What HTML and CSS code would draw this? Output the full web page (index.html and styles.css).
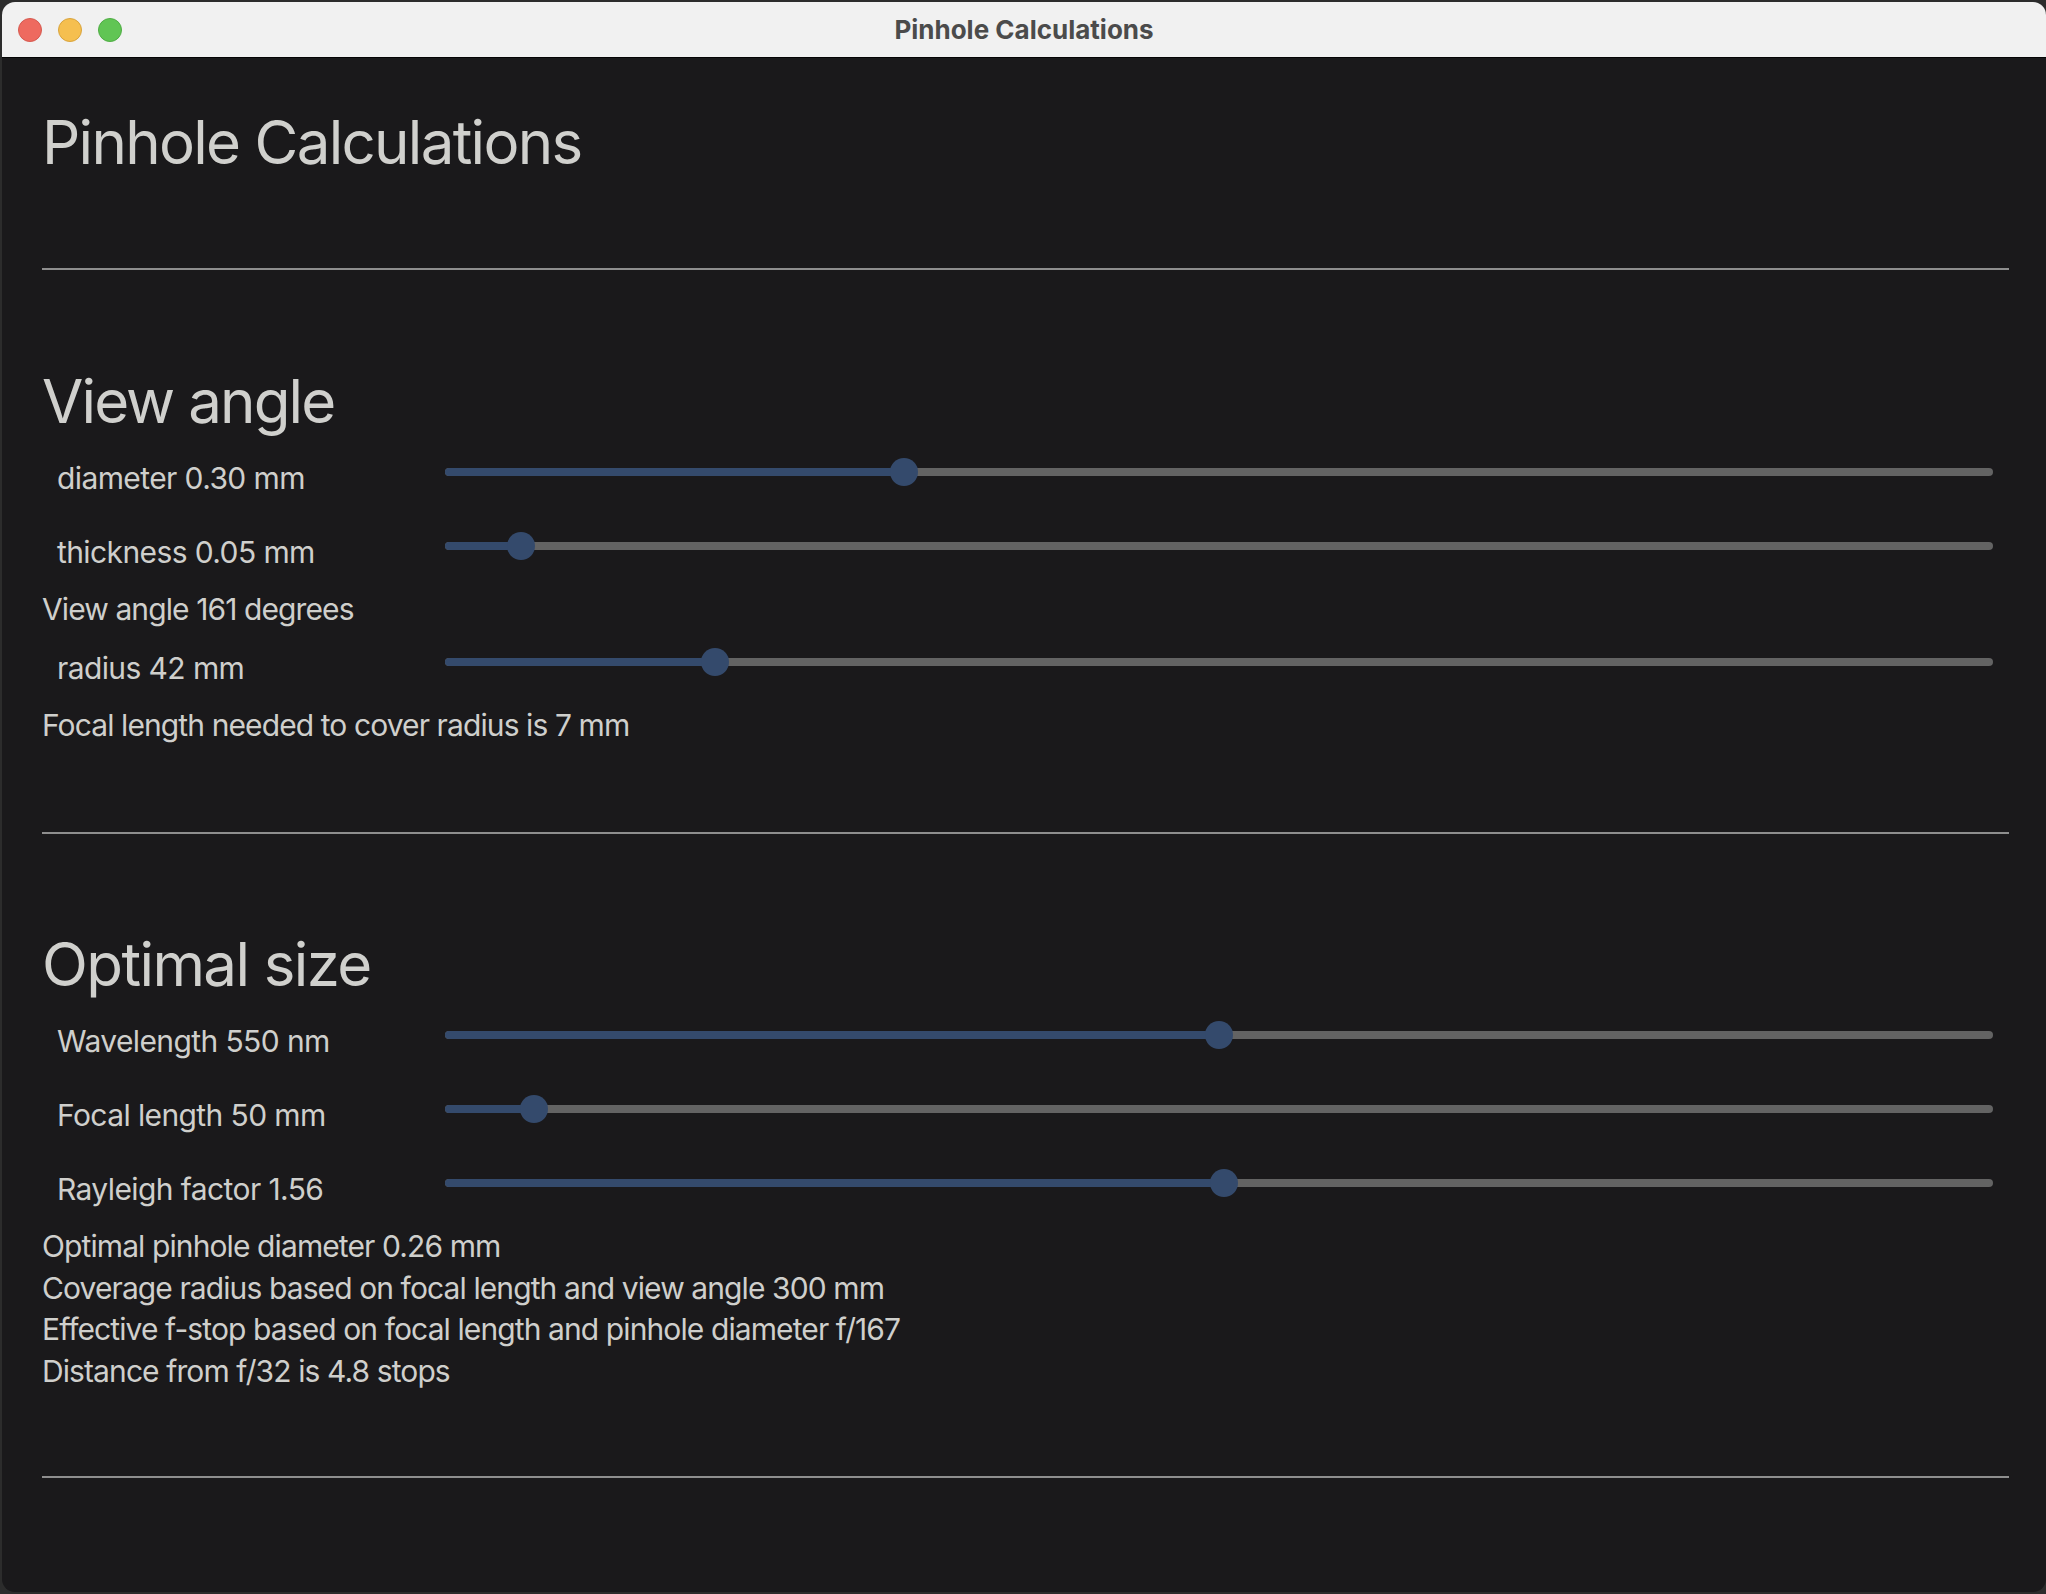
FILE: index.html
```html
<!DOCTYPE html>
<html lang="en">
<head>
<meta charset="utf-8">
<title>Pinhole Calculations</title>
<link rel="stylesheet" href="styles.css">
</head>
<body>
<div class="window">
  <header class="titlebar">
    <div class="lights">
      <span class="light red"></span>
      <span class="light yellow"></span>
      <span class="light green"></span>
    </div>
    <div class="title">Pinhole Calculations</div>
    <div></div>
  </header>
  <main class="content">
    <h1 class="page-title">Pinhole Calculations</h1>
    <hr class="divider">
    <section class="section">
      <h2 class="section-title">View angle</h2>
      <div class="row">
        <label class="row-label">diameter 0.30 mm</label>
        <div class="slider" style="--pos: 459px"><div class="fill"></div><div class="thumb"></div></div>
      </div>
      <div class="row">
        <label class="row-label">thickness 0.05 mm</label>
        <div class="slider" style="--pos: 76px"><div class="fill"></div><div class="thumb"></div></div>
      </div>
      <p class="line">View angle 161 degrees</p>
      <div class="row">
        <label class="row-label">radius 42 mm</label>
        <div class="slider" style="--pos: 270px"><div class="fill"></div><div class="thumb"></div></div>
      </div>
      <p class="line">Focal length needed to cover radius is 7 mm</p>
    </section>
    <hr class="divider">
    <section class="section section-last">
      <h2 class="section-title">Optimal size</h2>
      <div class="row">
        <label class="row-label">Wavelength 550 nm</label>
        <div class="slider" style="--pos: 774px"><div class="fill"></div><div class="thumb"></div></div>
      </div>
      <div class="row">
        <label class="row-label">Focal length 50 mm</label>
        <div class="slider" style="--pos: 89px"><div class="fill"></div><div class="thumb"></div></div>
      </div>
      <div class="row">
        <label class="row-label">Rayleigh factor 1.56</label>
        <div class="slider" style="--pos: 779px"><div class="fill"></div><div class="thumb"></div></div>
      </div>
      <p class="line">Optimal pinhole diameter 0.26 mm</p>
      <p class="line">Coverage radius based on focal length and view angle 300 mm</p>
      <p class="line">Effective f-stop based on focal length and pinhole diameter f/167</p>
      <p class="line">Distance from f/32 is 4.8 stops</p>
    </section>
    <hr class="divider">
  </main>
</div>
</body>
</html>
```

FILE: styles.css
```css
html, body {
  margin: 0;
  padding: 0;
}

body {
  background: #2c2c2c;
  width: 2046px;
  height: 1594px;
  overflow: hidden;
  font-family: Inter, "Liberation Sans", sans-serif;
}

.window {
  margin: 2px 0 0 2px;
  width: 2044px;
  height: 1590px;
  border-radius: 13px;
  overflow: hidden;
  background: #1a191b;
}

.titlebar {
  height: 55px;
  background: #f1f1f1;
  border-bottom: 1px solid #050505;
  display: grid;
  grid-template-columns: 1fr auto 1fr;
  align-items: center;
}

.lights {
  display: flex;
  gap: 16px;
  padding-left: 16px;
}

.light {
  width: 24px;
  height: 24px;
  border-radius: 50%;
  box-sizing: border-box;
}

.red { background: #ee6a5f; border: 1px solid #d65a50; }
.yellow { background: #f5bf4f; border: 1px solid #d9a43d; }
.green { background: #61c554; border: 1px solid #4fad44; }

.title {
  font-size: 26px;
  font-weight: 700;
  color: #4b4b4b;
}

.content {
  padding: 0 37px 0 40px;
  color: #cfcfcc;
}

.page-title {
  margin: 48px 0 0;
  font-size: 60px;
  line-height: 72px;
  font-weight: 400;
  letter-spacing: -1.7px;
  color: #d0d0cd;
}

.divider {
  margin: 90px 0 0;
  height: 2px;
  border: 0;
  background: #8e8e8e;
}

.section {
  padding-top: 95px;
  margin-bottom: 86px;
}

.section-last {
  padding-top: 94px;
  margin-bottom: 84px;
}

.section-title {
  margin: 0 0 4px;
  font-size: 60px;
  line-height: 72px;
  font-weight: 400;
  letter-spacing: -1.9px;
  color: #d0d0cd;
}

.section-last .section-title {
  letter-spacing: -1.6px;
}

.row {
  display: grid;
  grid-template-columns: 388px 1fr;
  align-items: start;
  height: 74px;
  padding: 0 16px 0 15px;
}

.row-label {
  font-size: 30px;
  line-height: 74px;
  letter-spacing: -0.6px;
  white-space: nowrap;
}

.slider {
  position: relative;
  height: 28px;
  margin-top: 17px;
}

.slider::before {
  content: "";
  position: absolute;
  left: 0;
  right: 0;
  top: 10px;
  height: 8px;
  border-radius: 4px;
  background: #636363;
}

.fill {
  position: absolute;
  left: 0;
  top: 10px;
  height: 8px;
  width: var(--pos);
  border-radius: 4px;
  background: #344a6c;
}

.thumb {
  position: absolute;
  top: 0;
  left: calc(var(--pos) - 14px);
  width: 28px;
  height: 28px;
  border-radius: 50%;
  background: #344a6c;
}

.line {
  margin: 0;
  font-size: 30px;
  line-height: 41.5px;
  letter-spacing: -0.9px;
  white-space: nowrap;
}

.section + .divider {
  margin-top: 0;
}
```
